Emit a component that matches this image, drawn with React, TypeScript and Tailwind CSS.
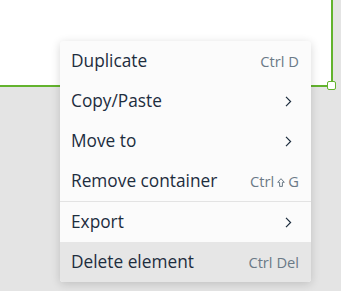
import React from 'react'

type Item = {
  label: string
  shortcut?: React.ReactNode
  submenu?: boolean
  active?: boolean
  divider?: boolean
}

const Chevron = () => (
  <svg width="7" height="11" viewBox="0 0 7 11" fill="none" className="mr-[7px]">
    <polyline points="1,0.8 5.6,5.5 1,10.2" stroke="#1d2d3e" strokeWidth="1.2" />
  </svg>
)

const ShiftIcon = () => (
  <svg width="8" height="9" viewBox="0 0 8 9" fill="none" className="inline-block mx-[3px] align-[-0.5px]">
    <path d="M4 0.7 L7.3 4.3 H5.4 V8.4 H2.6 V4.3 H0.7 Z" stroke="#6b7a87" strokeWidth="1" strokeLinejoin="round" />
  </svg>
)

const items: Item[] = [
  { label: 'Duplicate', shortcut: 'Ctrl D' },
  { label: 'Copy/Paste', submenu: true },
  { label: 'Move to', submenu: true },
  {
    label: 'Remove container',
    shortcut: (
      <>
        Ctrl<ShiftIcon />G
      </>
    ),
    divider: true,
  },
  { label: 'Export', submenu: true },
  { label: 'Delete element', shortcut: 'Ctrl Del', active: true },
]

export default function App() {
  return (
    <div
      className="relative w-[341px] h-[291px] overflow-hidden bg-[#e4e4e4]"
      style={{ fontFamily: '"Open Sans", "Noto Sans", sans-serif' }}
    >
      {/* selected element on the canvas */}
      <div className="absolute left-[-10px] top-[-10px] w-[343px] h-[97px] bg-white border-r-[2px] border-b-[2px] border-[#63b32e]" />
      <div className="absolute left-[327px] top-[81px] w-[9px] h-[9px] bg-white border-[1.5px] border-[#63b32e] rounded-[2px]" />

      {/* context menu */}
      <div className="absolute left-[60px] top-[41px] w-[251px] bg-[#fbfbfb] rounded-[3px] shadow-[0_2px_10px_rgba(0,0,0,0.16)] overflow-hidden">
        {items.map((item) => (
          <div
            key={item.label}
            className={`flex items-center justify-between h-[40px] pl-[11px] pr-[12px] ${
              item.active ? 'bg-[#e6e6e6]' : ''
            } ${item.divider ? 'border-b border-[#e3e3e3] h-[41px]' : ''}`}
          >
            <span className="text-[17.3px] text-[#1d2d3e]">{item.label}</span>
            {item.submenu ? (
              <Chevron />
            ) : (
              <span className="text-[14.7px] text-[#6b7a87]">{item.shortcut}</span>
            )}
          </div>
        ))}
      </div>
    </div>
  )
}
